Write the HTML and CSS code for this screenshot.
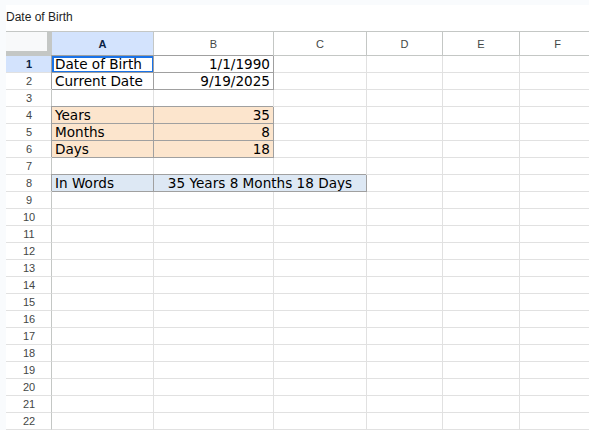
FILE: index.html
```html
<!DOCTYPE html>
<html>
<head>
<meta charset="utf-8">
<link rel="stylesheet" href="styles.css">
</head>
<body>
<div class="app">
  <div class="title">Date of Birth</div>
  <div class="sheet">
    <div class="corner"></div>
    <div class="ch sel">A</div><div class="ch">B</div><div class="ch">C</div><div class="ch">D</div><div class="ch">E</div><div class="ch">F</div>

    <div class="rh sel">1</div><div class="c b active">Date of Birth</div><div class="c b r">1/1/1990</div><div class="c"></div><div class="c"></div><div class="c"></div><div class="c"></div>
    <div class="rh">2</div><div class="c b">Current Date</div><div class="c b r">9/19/2025</div><div class="c"></div><div class="c"></div><div class="c"></div><div class="c"></div>
    <div class="rh">3</div><div class="c"></div><div class="c"></div><div class="c"></div><div class="c"></div><div class="c"></div><div class="c"></div>
    <div class="rh">4</div><div class="c b peach">Years</div><div class="c b peach r">35</div><div class="c"></div><div class="c"></div><div class="c"></div><div class="c"></div>
    <div class="rh">5</div><div class="c b peach">Months</div><div class="c b peach r">8</div><div class="c"></div><div class="c"></div><div class="c"></div><div class="c"></div>
    <div class="rh">6</div><div class="c b peach">Days</div><div class="c b peach r">18</div><div class="c"></div><div class="c"></div><div class="c"></div><div class="c"></div>
    <div class="rh">7</div><div class="c"></div><div class="c"></div><div class="c"></div><div class="c"></div><div class="c"></div><div class="c"></div>
    <div class="rh">8</div><div class="c b blue">In Words</div><div class="c b blue mid span2">35 Years 8 Months 18 Days</div><div class="c"></div><div class="c"></div><div class="c"></div>
    <div class="rh">9</div><div class="c"></div><div class="c"></div><div class="c"></div><div class="c"></div><div class="c"></div><div class="c"></div>
    <div class="rh">10</div><div class="c"></div><div class="c"></div><div class="c"></div><div class="c"></div><div class="c"></div><div class="c"></div>
    <div class="rh">11</div><div class="c"></div><div class="c"></div><div class="c"></div><div class="c"></div><div class="c"></div><div class="c"></div>
    <div class="rh">12</div><div class="c"></div><div class="c"></div><div class="c"></div><div class="c"></div><div class="c"></div><div class="c"></div>
    <div class="rh">13</div><div class="c"></div><div class="c"></div><div class="c"></div><div class="c"></div><div class="c"></div><div class="c"></div>
    <div class="rh">14</div><div class="c"></div><div class="c"></div><div class="c"></div><div class="c"></div><div class="c"></div><div class="c"></div>
    <div class="rh">15</div><div class="c"></div><div class="c"></div><div class="c"></div><div class="c"></div><div class="c"></div><div class="c"></div>
    <div class="rh">16</div><div class="c"></div><div class="c"></div><div class="c"></div><div class="c"></div><div class="c"></div><div class="c"></div>
    <div class="rh">17</div><div class="c"></div><div class="c"></div><div class="c"></div><div class="c"></div><div class="c"></div><div class="c"></div>
    <div class="rh">18</div><div class="c"></div><div class="c"></div><div class="c"></div><div class="c"></div><div class="c"></div><div class="c"></div>
    <div class="rh">19</div><div class="c"></div><div class="c"></div><div class="c"></div><div class="c"></div><div class="c"></div><div class="c"></div>
    <div class="rh">20</div><div class="c"></div><div class="c"></div><div class="c"></div><div class="c"></div><div class="c"></div><div class="c"></div>
    <div class="rh">21</div><div class="c"></div><div class="c"></div><div class="c"></div><div class="c"></div><div class="c"></div><div class="c"></div>
    <div class="rh">22</div><div class="c"></div><div class="c"></div><div class="c"></div><div class="c"></div><div class="c"></div><div class="c"></div>
  </div>
</div>
</body>
</html>
```
FILE: styles.css
```css
html, body {
  margin: 0;
  height: 100%;
}
body {
  background: #f9fbfd;
  overflow: hidden;
  font-family: "Liberation Sans", Arial, sans-serif;
}
.app {
  margin: 5px 0 0 6px;
  background: #fff;
  height: calc(100% - 5px);
  overflow: hidden;
}
.title {
  font-size: 12px;
  line-height: 14px;
  padding: 5px 0 7px 0;
  color: #1f1f1f;
  height: 14px;
}
.sheet {
  display: grid;
  grid-template-columns: 46px 102px 120px 93px 76px 77px 76px;
  grid-template-rows: 24px;
  grid-auto-rows: 17px;
  border-top: 1px solid #c4c7c5;
}
.sheet > div {
  box-sizing: border-box;
  border-right: 1px solid #e1e1e1;
  border-bottom: 1px solid #e1e1e1;
  white-space: nowrap;
  overflow: visible;
}
.sheet > .corner {
  background: #f8f9fa;
  border-right: 5px solid #c4c7c5;
  border-bottom: 5px solid #c4c7c5;
}
.sheet > .ch {
  border-right-color: #c4c7c5;
  border-bottom-color: #c4c7c5;
  font-size: 11px;
  color: #444746;
  display: flex;
  align-items: center;
  justify-content: center;
  padding-top: 1px;
}
.sheet > .rh {
  border-right: 1px solid #c4c7c5;
  font-size: 11px;
  color: #444746;
  display: flex;
  align-items: center;
  justify-content: center;
  padding-left: 1px;
}
.sheet > .sel {
  background: #d3e3fd;
  color: #0b1f44;
  font-weight: bold;
}
.c {
  font-family: "DejaVu Sans", Verdana, sans-serif;
  font-size: 13.6px;
  line-height: 16px;
  padding: 0 3px;
  color: #000;
}
.sheet > .b {
  border-right-color: #a0a0a0;
  border-bottom-color: #a0a0a0;
  box-shadow: -1px -1px 0 0 #a0a0a0;
}
.r { text-align: right; }
.mid { text-align: center; }
.span2 { grid-column: span 2; }
.peach { background: #fce5cd; }
.blue { background: #dde8f4; }
.active {
  outline: 2px solid #1a73e8;
  outline-offset: -2px;
}
```
